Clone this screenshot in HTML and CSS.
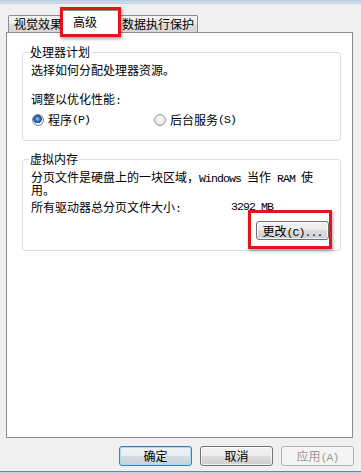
FILE: index.html
```html
<!DOCTYPE html>
<html lang="zh-CN">
<head>
<meta charset="utf-8">
<title>系统属性 - 高级</title>
<link rel="stylesheet" href="styles.css">
</head>
<body>
  <div class="frame-top"></div>
  <div class="tabs">
    <div class="tab tab-first">视觉效果</div>
    <div class="tab tab-active">高级</div>
    <div class="tab tab-last">数据执行保护</div>
  </div>
  <div class="panel">
    <fieldset class="group group-cpu">
      <legend>处理器计划</legend>
      <p class="line desc">选择如何分配处理器资源。</p>
      <p class="line adjust">调整以优化性能<span class="en">:</span></p>
      <div class="radios">
        <label class="radio radio-first"><span class="dot dot-on"></span>程序<span class="en">(P)</span></label>
        <label class="radio"><span class="dot"></span>后台服务<span class="en">(S)</span></label>
      </div>
    </fieldset>
    <fieldset class="group group-mem">
      <legend>虚拟内存</legend>
      <p class="wrap wrap-first">分页文件是硬盘上的一块区域，<span class="en">Windows </span>当作<span class="en"> RAM </span>使</p>
      <p class="wrap">用。</p>
      <div class="line size-row">
        <span class="size-label">所有驱动器总分页文件大小<span class="en">:</span></span>
        <span class="en">3292 MB</span>
      </div>
      <div class="btn-row">
        <button class="btn">更改<span class="en">(C)...</span></button>
      </div>
    </fieldset>
  </div>
  <div class="footer">
    <button class="btn btn-default">确定</button>
    <button class="btn">取消</button>
    <button class="btn btn-disabled">应用<span class="en">(A)</span></button>
  </div>
  <div class="frame-bottom"></div>
  <div class="mark mark-tab"></div>
  <div class="mark mark-btn"></div>
</body>
</html>
```

FILE: styles.css
```css
* { box-sizing: border-box; }

html, body {
  margin: 0;
  padding: 0;
}

body {
  position: relative;
  width: 361px;
  height: 474px;
  overflow: hidden;
  background: #f0f0f0;
  font-family: "Noto Sans CJK SC", "Noto Sans", sans-serif;
  font-size: 12px;
  color: #000;
  display: flex;
  flex-direction: column;
}

.en {
  font-family: "Liberation Mono", "DejaVu Sans Mono", monospace;
  font-size: 11.5px;
  letter-spacing: -0.9px;
}

.frame-top {
  height: 4px;
  flex: none;
  background: linear-gradient(#b8cbe0, #d3e0ee);
  border-bottom: 1px solid #c9d3de;
}

.tabs {
  flex: none;
  display: flex;
  align-items: flex-end;
  height: 22px;
  margin-top: 6px;
  padding-left: 8px;
}

.tab {
  height: 17px;
  line-height: 16px;
  border: 1px solid #898c95;
  border-bottom: none;
  border-radius: 2px 2px 0 0;
  background: linear-gradient(#f3f3f3, #ebebeb 50%, #dddddd 51%, #d6d6d6);
  white-space: nowrap;
  overflow: hidden;
}

.tab-first {
  width: 54px;
  padding-left: 5px;
}

.tab-active {
  position: relative;
  z-index: 1;
  width: 58px;
  height: 23px;
  line-height: 22px;
  margin-left: -1px;
  margin-bottom: -1px;
  padding-left: 11px;
  background: #fff;
}

.tab-last {
  width: 80px;
  margin-left: -1px;
  padding-left: 3px;
}

.panel {
  flex: none;
  margin-left: 6px;
  width: 347px;
  height: 406px;
  border: 1px solid #898c95;
  background: #fff;
  padding-top: 12px;
}

.group {
  margin: 0 11px 0 15px;
  padding: 0 11px 13px 8px;
  border: 1px solid #d5dfe5;
  border-radius: 3px;
  min-width: 0;
}

.group legend {
  padding: 0 1px;
  margin-left: -2px;
  line-height: 14px;
  height: 14px;
}

.group-mem {
  margin-top: 11px;
  padding-bottom: 10px;
}

.line {
  margin: 0;
  height: 14px;
  line-height: 14px;
  white-space: nowrap;
}

.desc { margin-top: 4px; }
.adjust { margin-top: 15px; }

.radios {
  display: flex;
  align-items: center;
  margin-top: 7px;
  height: 14px;
}

.radio {
  display: flex;
  align-items: center;
  line-height: 14px;
  white-space: nowrap;
}

.radio-first {
  width: 123px;
  padding-left: 1px;
}

.dot {
  width: 12px;
  height: 12px;
  margin-right: 4px;
  border-radius: 50%;
  border: 1px solid #9a9a9a;
  background: radial-gradient(circle at 50% 45%, #ffffff 0%, #eaeaea 55%, #cfcfcf 100%);
  flex: none;
}

.dot-on {
  border-color: #7a8a99;
  background:
    radial-gradient(circle at 45% 40%, #9fd4f2 0px, #3d86c4 2px, #14497c 4px, rgba(20, 73, 124, 0) 4.5px),
    radial-gradient(circle, #ffffff 0%, #e2e2e2 100%);
}

.wrap {
  margin: 0;
  height: 13px;
  line-height: 13px;
  white-space: nowrap;
}

.wrap-first {
  margin-top: 4px;
}

.size-row {
  display: flex;
  margin-top: 4px;
}

.size-label {
  width: 200px;
}

.btn-row {
  display: flex;
  justify-content: flex-end;
  margin-top: 7px;
}

.btn {
  width: 73px;
  height: 19px;
  padding: 0;
  font-family: inherit;
  font-size: 12px;
  line-height: 17px;
  color: #000;
  border: 1px solid #707070;
  border-radius: 3px;
  background: linear-gradient(#f2f2f2 0%, #ebebeb 49%, #dddddd 50%, #cfcfcf 100%);
  box-shadow: inset 0 0 0 1px rgba(255, 255, 255, 0.7);
}

.footer {
  flex: none;
  display: flex;
  justify-content: flex-end;
  gap: 8px;
  margin-top: 8px;
  padding-right: 7px;
}

.footer .btn {
  height: 20px;
  line-height: 18px;
}

.btn-default {
  border-color: #3c7fb1;
  box-shadow: inset 0 0 0 1px #a9dcf6;
  background: linear-gradient(#eef3f6 0%, #e6ecf0 49%, #d6dde2 50%, #c8d1d7 100%);
}

.btn-disabled {
  border-color: #adb2b5;
  background: #f4f4f4;
  box-shadow: none;
  color: #9a9a9a;
}

.frame-bottom {
  flex: none;
  margin-top: auto;
  height: 3px;
  border-top: 1px solid #6f8599;
  background: #c3d3e3;
}

.mark {
  position: absolute;
  border: 3px solid #e3141c;
  box-shadow: 1px 2px 3px rgba(0, 0, 0, 0.35);
  z-index: 5;
}

.mark-tab {
  left: 60px;
  top: 7px;
  width: 61px;
  height: 30px;
}

.mark-btn {
  left: 248px;
  top: 210px;
  width: 84px;
  height: 39px;
}
```
